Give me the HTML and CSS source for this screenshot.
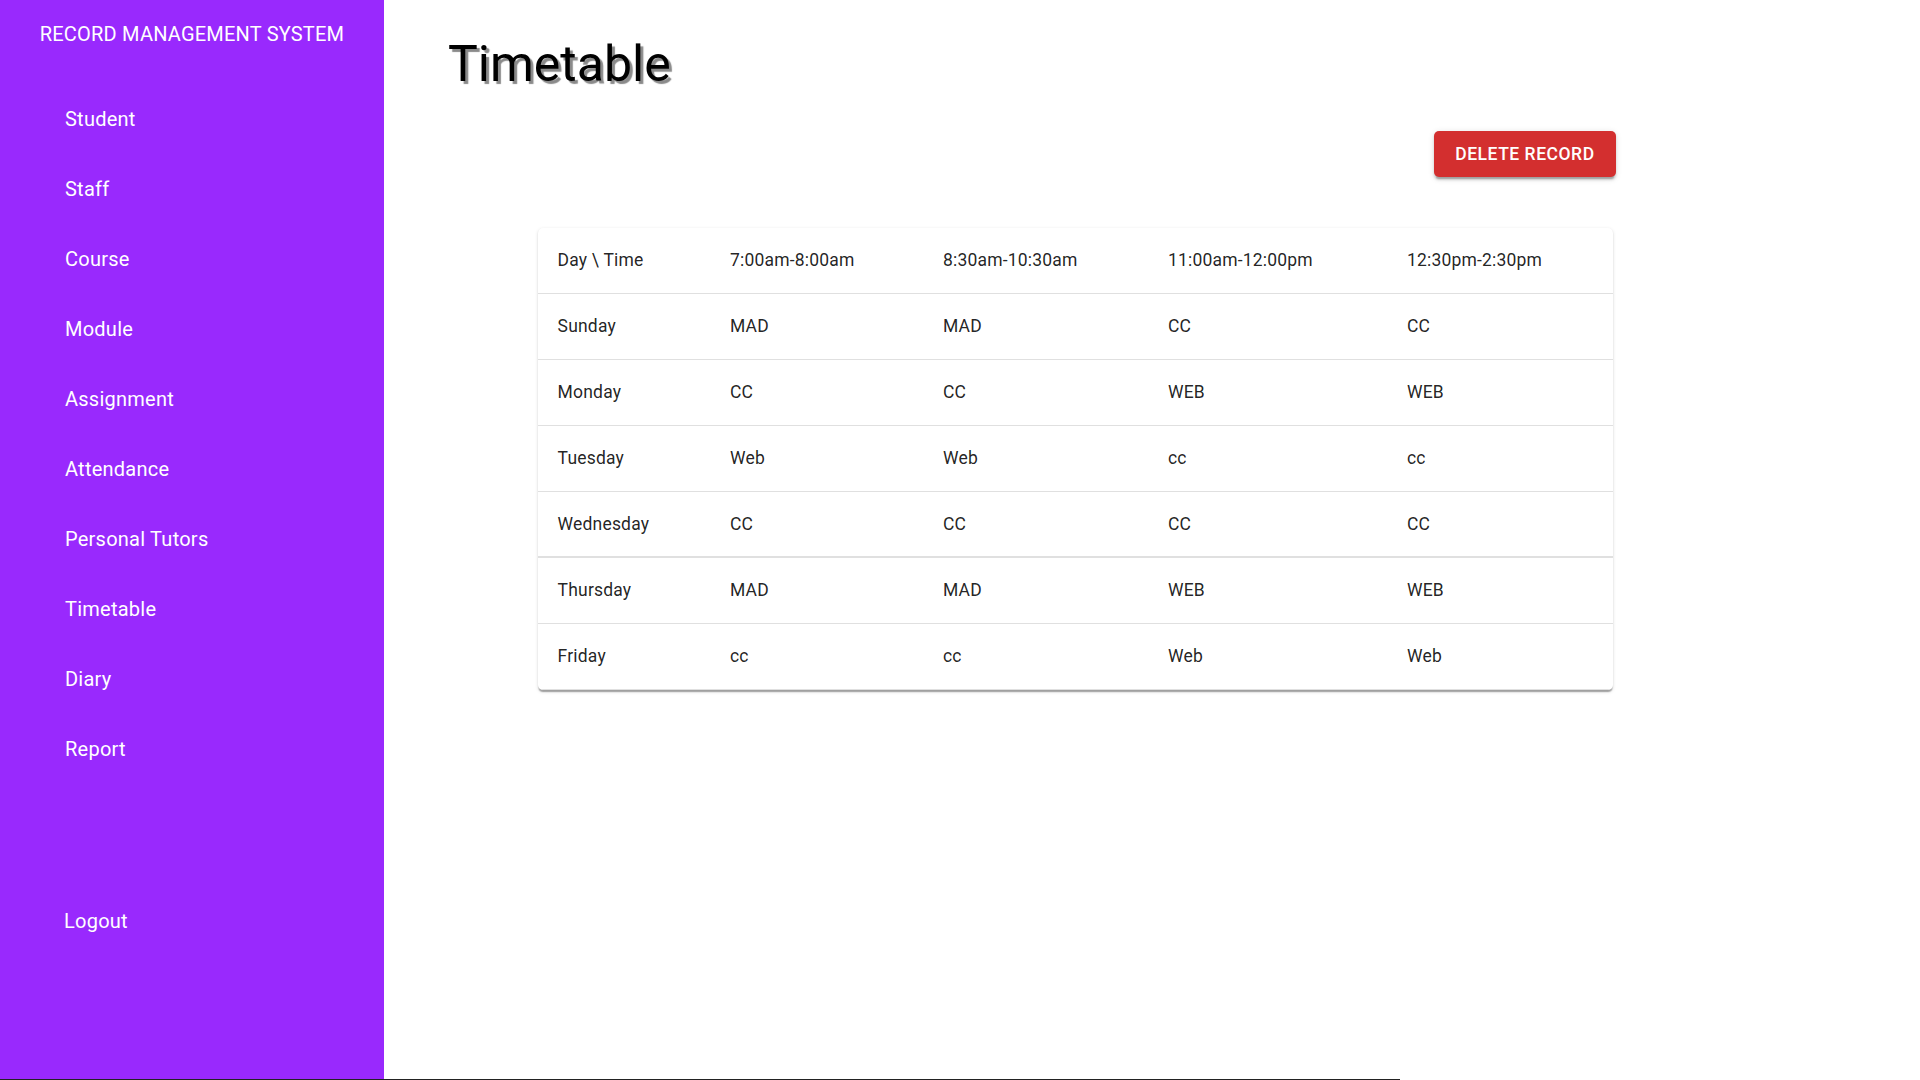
FILE: index.html
```html
<!DOCTYPE html>
<html lang="en">
<head>
<meta charset="utf-8">
<title>Timetable</title>
<link rel="stylesheet" href="styles.css">
</head>
<body>
<div class="app">
  <aside class="sidebar">
    <div class="brand">RECORD MANAGEMENT SYSTEM</div>
    <nav class="nav">
      <div class="nav-item">Student</div>
      <div class="nav-item">Staff</div>
      <div class="nav-item">Course</div>
      <div class="nav-item">Module</div>
      <div class="nav-item">Assignment</div>
      <div class="nav-item">Attendance</div>
      <div class="nav-item">Personal Tutors</div>
      <div class="nav-item">Timetable</div>
      <div class="nav-item">Diary</div>
      <div class="nav-item">Report</div>
    </nav>
    <div class="nav-item logout">Logout</div>
  </aside>
  <main class="main">
    <h1 class="title">Timetable</h1>
    <div class="content">
      <div class="toolbar">
        <button class="btn-danger">Delete Record</button>
      </div>
      <div class="paper">
        <table class="table">
          <colgroup>
            <col class="c1"><col class="c2"><col class="c3"><col class="c4"><col class="c5">
          </colgroup>
          <tbody>
            <tr><td>Day \ Time</td><td>7:00am-8:00am</td><td>8:30am-10:30am</td><td>11:00am-12:00pm</td><td>12:30pm-2:30pm</td></tr>
            <tr><td>Sunday</td><td>MAD</td><td>MAD</td><td>CC</td><td>CC</td></tr>
            <tr><td>Monday</td><td>CC</td><td>CC</td><td>WEB</td><td>WEB</td></tr>
            <tr><td>Tuesday</td><td>Web</td><td>Web</td><td>cc</td><td>cc</td></tr>
            <tr class="thick"><td>Wednesday</td><td>CC</td><td>CC</td><td>CC</td><td>CC</td></tr>
            <tr><td>Thursday</td><td>MAD</td><td>MAD</td><td>WEB</td><td>WEB</td></tr>
            <tr><td>Friday</td><td>cc</td><td>cc</td><td>Web</td><td>Web</td></tr>
          </tbody>
        </table>
      </div>
    </div>
  </main>
</div>
<div class="bottom-line"></div>
</body>
</html>
```

FILE: styles.css
```css
html, body {
  margin: 0;
  padding: 0;
  background: #ffffff;
  font-family: Roboto, "Liberation Sans", sans-serif;
}

.app {
  display: flex;
  height: 1079px;
}

.sidebar {
  width: 384px;
  flex: 0 0 384px;
  background: #9929fd;
  color: #ffffff;
  display: flex;
  flex-direction: column;
}

.brand {
  margin-top: 22px;
  height: 24px;
  line-height: 24px;
  font-size: 20px;
  text-align: center;
  letter-spacing: 0.01em;
}

.nav {
  margin-top: 38px;
  display: flex;
  flex-direction: column;
}

.nav-item {
  height: 70px;
  line-height: 70px;
  padding-left: 65px;
  font-size: 20px;
  letter-spacing: 0.012em;
}

.logout {
  margin-top: 102px;
  padding-left: 64px;
}

.main {
  flex: 1;
  display: flex;
  flex-direction: column;
}

.title {
  margin: 33px 0 0 64px;
  font-size: 50px;
  line-height: 62px;
  font-weight: 400;
  color: #000000;
  text-shadow: 3px 3px 1px #8a8a8a;
}

.content {
  margin-left: 153.6px;
  width: 1075px;
  display: flex;
  flex-direction: column;
}

.toolbar {
  margin-top: 36px;
  display: flex;
  justify-content: flex-end;
  margin-right: -3px;
}

.btn-danger {
  background: #d32f2f;
  color: #ffffff;
  border: none;
  border-radius: 5px;
  padding: 7.5px 21px;
  font-family: Roboto, "Liberation Sans", sans-serif;
  font-size: 17.5px;
  font-weight: 500;
  line-height: 30.6px;
  letter-spacing: 0.03em;
  text-transform: uppercase;
  box-shadow: 0 3.75px 1.25px -2.5px rgba(0,0,0,0.2), 0 2.5px 2.5px 0 rgba(0,0,0,0.14), 0 1.25px 6.25px 0 rgba(0,0,0,0.12);
}

.paper {
  margin-top: 51px;
  background: #ffffff;
  border-radius: 5px;
  box-shadow: 0 2.5px 1.25px -1.25px rgba(0,0,0,0.2), 0 1.25px 1.25px 0 rgba(0,0,0,0.14), 0 1.25px 3.75px 0 rgba(0,0,0,0.12);
  overflow: hidden;
}

.table {
  width: 100%;
  border-collapse: collapse;
  table-layout: fixed;
}

.c1 { width: 172.4px; }
.c2 { width: 213px; }
.c3 { width: 225px; }
.c4 { width: 239px; }
.c5 { width: 225.6px; }

.table td {
  padding: 20px;
  font-size: 17.5px;
  line-height: 25px;
  color: rgba(0,0,0,0.87);
  border-bottom: 1px solid #e0e0e0;
  letter-spacing: 0.01071em;
  white-space: nowrap;
}

.table tr.thick td {
  border-bottom: 2px solid #e0e0e0;
  padding-bottom: 19px;
}

.bottom-line {
  width: 1400px;
  height: 1px;
  background: #222222;
}
```
